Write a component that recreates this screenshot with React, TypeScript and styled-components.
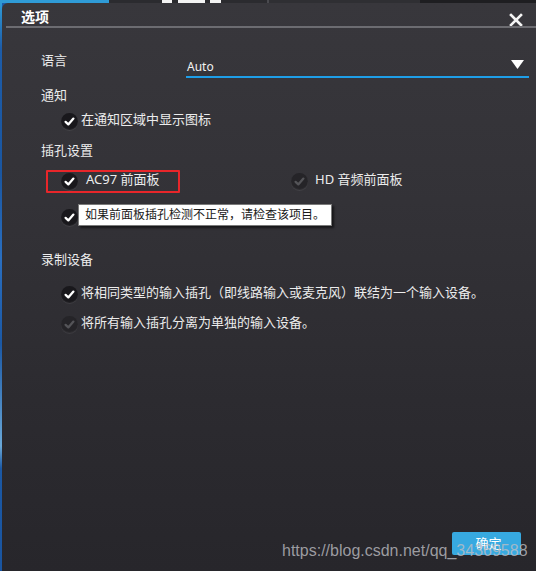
import React from "react";
import styled, { createGlobalStyle } from "styled-components";

const Global = createGlobalStyle`
  html, body { margin: 0; padding: 0; background: #1d5ca8; }
  body { width: 536px; height: 571px; overflow: hidden; }
  #root { width: 536px; height: 571px; }
`;

const Page = styled.div`
  width: 536px;
  height: 571px;
  display: flex;
  flex-direction: column;
  background: #1d5ca8;
  font-family: "Noto Sans", "Noto Sans CJK SC", sans-serif;
  position: relative;
  overflow: hidden;
`;

const TopStrip = styled.div`
  height: 3px;
  display: flex;
  flex-shrink: 0;
`;

const Seg = styled.div<{ $w: number; $c: string }>`
  width: ${(p) => p.$w}px;
  flex-shrink: 0;
  background: ${(p) => p.$c};
`;

const Body = styled.div`
  flex: 1;
  display: flex;
`;

const LeftStrip = styled.div`
  width: 2px;
  flex-shrink: 0;
  background: linear-gradient(
    #2f9bd7 0%,
    #1d5ca8 8%,
    #1a56a0 30%,
    #2a6fc0 45%,
    #1b58a4 60%,
    #6aa8d8 78%,
    #1b58a4 82%,
    #1a55a0 100%
  );
`;

const Dialog = styled.div`
  flex: 1;
  display: flex;
  flex-direction: column;
  border-top-left-radius: 6px;
  background: linear-gradient(#38373c 0%, #333237 35%, #2b2a2f 75%, #27262b 100%);
  color: #ececec;
`;

const TitleBar = styled.div`
  height: 23px;
  display: flex;
  justify-content: space-between;
  align-items: flex-end;
  padding: 0 13px 0 19px;
  flex-shrink: 0;
`;

const Title = styled.div`
  font-size: 14px;
  font-weight: 700;
  line-height: 18px;
  color: #ffffff;
`;

const CloseBtn = styled.div`
  width: 14px;
  height: 14px;
  margin-bottom: -1px;
  display: flex;
`;

const Separator = styled.div`
  height: 2px;
  margin-left: 4px;
  background: #6c6c71;
  flex-shrink: 0;
`;

const Content = styled.div`
  padding-left: 39px;
  display: flex;
  flex-direction: column;
`;

const Heading = styled.div<{ $mt: number }>`
  font-size: 13px;
  line-height: 18px;
  height: 18px;
  margin-top: ${(p) => p.$mt}px;
  color: #ececec;
`;

const LangRow = styled.div`
  display: flex;
  align-items: flex-start;
  margin-top: 23px;
`;

const LangLabel = styled.div`
  width: 145px;
  font-size: 13px;
  line-height: 18px;
  color: #ececec;
`;

const Select = styled.div`
  margin-top: 6px;
  width: 343px;
  height: 21px;
  box-sizing: border-box;
  border-bottom: 2px solid #1e9ee8;
  display: flex;
  align-items: center;
  justify-content: space-between;
  padding: 0 5px 0 1px;
`;

const SelectText = styled.span`
  font-size: 12px;
  line-height: 18px;
  color: #f2f2f2;
  margin-top: 1px;
`;

const Arrow = styled.svg`
  width: 13px;
  height: 9px;
  margin-top: -5px;
`;

const CheckRow = styled.div<{ $mt: number }>`
  display: flex;
  align-items: center;
  height: 20px;
  margin-top: ${(p) => p.$mt}px;
  margin-left: 20px;
  position: relative;
`;

const JackGrid = styled.div<{ $mt: number }>`
  display: grid;
  grid-template-columns: 230px auto;
  height: 20px;
  margin-top: ${(p) => p.$mt}px;
  margin-left: 20px;
`;

const Item = styled.div<{ $gap: number; $marked?: boolean }>`
  display: flex;
  align-items: center;
  gap: ${(p) => p.$gap}px;
  position: relative;
  height: 20px;
  ${(p) =>
    p.$marked
      ? `&::after {
    content: "";
    position: absolute;
    left: -15px;
    top: 1px;
    width: 134px;
    height: 23px;
    box-sizing: border-box;
    border: 2px solid #e8262a;
    border-radius: 1px;
  }`
      : ""}
`;

const Circle = styled.div<{ $on: boolean }>`
  width: 17px;
  height: 17px;
  border-radius: 50%;
  flex-shrink: 0;
  margin-top: 4px;
  margin-right: 3px;
  display: flex;
  align-items: center;
  justify-content: center;
  background: ${(p) => (p.$on ? "#19181c" : "#252428")};
  box-shadow: 0 1px 0 rgba(255, 255, 255, 0.07), inset 0 -1px 1px rgba(255, 255, 255, 0.05);
`;

const Label = styled.span`
  font-size: 13px;
  line-height: 18px;
  color: #ececec;
  white-space: nowrap;
`;

const Tooltip = styled.div`
  position: absolute;
  left: 17px;
  top: -1px;
  width: 254px;
  height: 22px;
  box-sizing: border-box;
  background: #ffffff;
  border: 1px solid #7a7a7a;
  box-shadow: 2px 2px 2px rgba(0, 0, 0, 0.55);
  font-size: 12px;
  line-height: 19px;
  color: #1a1a1a;
  padding-left: 6px;
  white-space: nowrap;
`;

const Footer = styled.div`
  margin-top: auto;
  display: flex;
  justify-content: flex-end;
  padding: 0 15px 16px 0;
`;

const OkButton = styled.div`
  width: 69px;
  height: 23px;
  border-radius: 2px;
  background: #37a9e0;
  color: #ffffff;
  font-size: 13px;
  line-height: 23px;
  text-align: center;
  padding-left: 4px;
  box-sizing: border-box;
`;

const Watermark = styled.div`
  position: absolute;
  left: 282px;
  top: 541px;
  font-family: "Liberation Sans", Arial, sans-serif;
  font-size: 16px;
  line-height: 20px;
  color: rgba(190, 190, 195, 0.78);
  white-space: nowrap;
`;

const Check = ({ on }: { on: boolean }) => (
  <Circle $on={on}>
    <svg width="17" height="17" viewBox="0 0 17 17">
      <polyline
        points="4.6,8.9 7.3,11.4 12.4,5.6"
        fill="none"
        stroke={on ? "#ffffff" : "#545458"}
        strokeWidth="2.3"
        strokeLinecap="round"
        strokeLinejoin="round"
      />
    </svg>
  </Circle>
);

export default function App() {
  return (
    <>
      <Global />
      <Page>
        <TopStrip>
          <Seg $w={109} $c="#2f9bd7" />
          <Seg $w={53} $c="#2b2b2f" />
          <Seg $w={10} $c="#f4f4f4" />
          <Seg $w={6} $c="#2b2b2f" />
          <Seg $w={27} $c="#f4f4f4" />
          <Seg $w={5} $c="#2b2b2f" />
          <Seg $w={11} $c="#f4f4f4" />
          <Seg $w={46} $c="#2b2b2f" />
          <Seg $w={2} $c="#4a4a4f" />
          <Seg $w={151} $c="#2f2f33" />
          <Seg $w={116} $c="#1e1e21" />
        </TopStrip>
        <Body>
          <LeftStrip />
          <Dialog>
            <TitleBar>
              <Title>选项</Title>
              <CloseBtn>
                <svg width="14" height="14" viewBox="0 0 14 14">
                  <path d="M2 2 L12 12 M12 2 L2 12" stroke="#f4f4f4" strokeWidth="2.6" strokeLinecap="square" />
                </svg>
              </CloseBtn>
            </TitleBar>
            <Separator />
            <Content>
              <LangRow>
                <LangLabel>语言</LangLabel>
                <Select>
                  <SelectText>Auto</SelectText>
                  <Arrow viewBox="0 0 13 9">
                    <polygon points="0,0 13,0 6.5,9" fill="#ffffff" />
                  </Arrow>
                </Select>
              </LangRow>

              <Heading $mt={8}>通知</Heading>
              <CheckRow $mt={5}>
                <Check on />
                <Label>在通知区域中显示图标</Label>
              </CheckRow>

              <Heading $mt={12}>插孔设置</Heading>
              <JackGrid $mt={10}>
                <Item $gap={5} $marked>
                  <Check on />
                  <Label>AC97 前面板</Label>
                </Item>
                <Item $gap={4}>
                  <Check on={false} />
                  <Label>HD 音频前面板</Label>
                </Item>
              </JackGrid>
              <CheckRow $mt={16}>
                <Check on />
                <Tooltip>如果前面板插孔检测不正常，请检查该项目。</Tooltip>
              </CheckRow>

              <Heading $mt={25}>录制设备</Heading>
              <CheckRow $mt={14}>
                <Check on />
                <Label>将相同类型的输入插孔（即线路输入或麦克风）联结为一个输入设备。</Label>
              </CheckRow>
              <CheckRow $mt={10}>
                <Check on={false} />
                <Label>将所有输入插孔分离为单独的输入设备。</Label>
              </CheckRow>
            </Content>
            <Footer>
              <OkButton>确定</OkButton>
            </Footer>
          </Dialog>
        </Body>
        <Watermark>https://blog.csdn.net/qq_34369588</Watermark>
      </Page>
    </>
  );
}
